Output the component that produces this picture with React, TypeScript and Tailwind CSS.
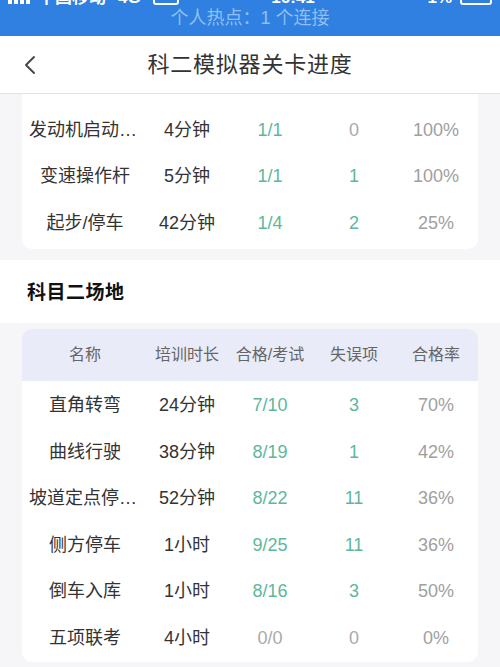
import { ChevronLeft } from "lucide-react";

const font = { fontFamily: '"Liberation Sans", "Noto Sans CJK SC", sans-serif' };

const cols = "grid grid-cols-[126px_78px_88px_80px_84px]";

type Row = [string, string, string, number, string];

const topRows: Row[] = [
  ["发动机启动熄火", "4分钟", "1/1", 0, "100%"],
  ["变速操作杆", "5分钟", "1/1", 1, "100%"],
  ["起步/停车", "42分钟", "1/4", 2, "25%"],
];

const fieldRows: Row[] = [
  ["直角转弯", "24分钟", "7/10", 3, "70%"],
  ["曲线行驶", "38分钟", "8/19", 1, "42%"],
  ["坡道定点停车和起步", "52分钟", "8/22", 11, "36%"],
  ["侧方停车", "1小时", "9/25", 11, "36%"],
  ["倒车入库", "1小时", "8/16", 3, "50%"],
  ["五项联考", "4小时", "0/0", 0, "0%"],
];

function DataRow({ row }: { row: Row }) {
  const [name, time, pass, miss, rate] = row;
  const passed = !pass.startsWith("0/");
  return (
    <div className={`${cols} h-[46.5px] items-center text-center text-[18px]`}>
      <div className="truncate px-[7px] text-[#333]">{name}</div>
      <div className="text-[#333]">{time}</div>
      <div className={passed ? "text-[#5db89b]" : "text-[#aaa]"}>{pass}</div>
      <div className={miss > 0 ? "text-[#5db89b]" : "text-[#aaa]"}>{miss}</div>
      <div className="text-[#a0a0a0]">{rate}</div>
    </div>
  );
}

export default function App() {
  return (
    <div className="h-[667px] w-[500px] overflow-hidden bg-[#f6f6f8]" style={font}>
      <div className="h-[36px] overflow-hidden bg-[#2f80e1]">
        <div className="-mt-[10px] flex h-[16px] items-center justify-between px-[8px] text-[17px] font-semibold text-white">
          <div className="flex items-center gap-[8px]">
            <span className="flex items-end gap-[2px]">
              <span className="h-[6px] w-[4px] bg-white" />
              <span className="h-[8px] w-[4px] bg-white" />
              <span className="h-[10px] w-[4px] bg-white" />
              <span className="h-[12px] w-[4px] bg-white" />
            </span>
            <span>中国移动</span>
            <span className="ml-[4px]">4G</span>
            <span className="ml-[4px] h-[14px] w-[26px] rounded-[3px] border-2 border-white" />
          </div>
          <span className="-ml-[20px]">16:41</span>
          <div className="flex items-center gap-[8px]">
            <span>1%</span>
            <span className="h-[14px] w-[32px] rounded-[3px] border-2 border-white" />
          </div>
        </div>
        <div className="mt-[2px] text-center text-[18px] leading-[20px] text-[#8fbff3]">
          个人热点：1 个连接
        </div>
      </div>

      <div className="relative flex h-[58px] items-center justify-center border-b border-[#e3e3e3] bg-white">
        <ChevronLeft className="absolute left-[14px] top-[13px] text-[#444]" size={32} strokeWidth={1.4} />
        <h1 className="text-[22px] tracking-[0.8px] text-[#333]">科二模拟器关卡进度</h1>
      </div>

      <div className="mx-[22px] rounded-b-[10px] bg-white pb-[2px] pt-[13px]">
        {topRows.map((r) => (
          <DataRow key={r[0]} row={r} />
        ))}
      </div>

      <div className="mt-[11px] flex h-[63px] items-center bg-white px-[27px] pt-[4px]">
        <h2 className="text-[19px] font-bold tracking-[0.5px] text-[#111]">科目二场地</h2>
      </div>

      <div className="mx-[22px] mt-[6px] overflow-hidden rounded-[10px] bg-white">
        <div className={`${cols} h-[52px] items-center bg-[#e9ebf8] text-center text-[16px] text-[#666]`}>
          <div>名称</div>
          <div>培训时长</div>
          <div>合格/考试</div>
          <div>失误项</div>
          <div>合格率</div>
        </div>
        <div className="pt-[2px]">
          {fieldRows.map((r) => (
            <DataRow key={r[0]} row={r} />
          ))}
        </div>
      </div>
    </div>
  );
}
